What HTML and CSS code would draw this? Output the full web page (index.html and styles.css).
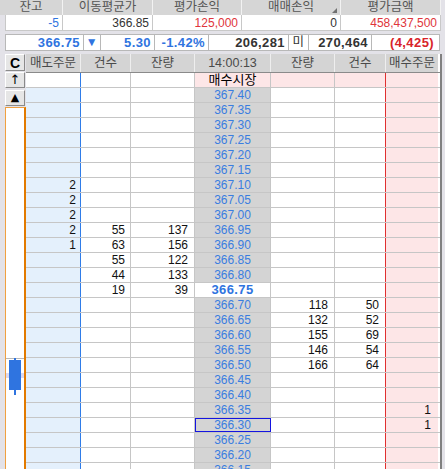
FILE: index.html
```html
<!DOCTYPE html>
<html lang="ko">
<head>
<meta charset="UTF-8" />
<title>호가</title>
<link rel="stylesheet" href="styles.css">
</head>
<body>

<div class="summary">
  <div class="sum-head">
    <div class="c-a">잔고</div>
    <div class="c-b">이동평균가</div>
    <div class="c-c">평가손익</div>
    <div class="c-d sortable">매매손익</div>
    <div class="c-e">평가금액</div>
  </div>
  <div class="sum-vals">
    <div class="c-a blue">-5</div>
    <div class="c-b">366.85</div>
    <div class="c-c red">125,000</div>
    <div class="c-d">0</div>
    <div class="c-e red">458,437,500</div>
  </div>
</div>

<div class="ticker">
  <div class="t-price blue">366.75</div>
  <div class="t-arrow blue">▼</div>
  <div class="t-diff blue">5.30</div>
  <div class="t-rate blue">-1.42%</div>
  <div class="t-vol">206,281</div>
  <div class="t-mi">미</div>
  <div class="t-oi">270,464</div>
  <div class="t-chg red">(4,425)</div>
</div>

<div class="board">
  <div class="side">
    <button class="side-btn btn-c">C</button>
    <button class="side-btn btn-up">↑</button>
    <button class="side-btn btn-top">▲</button>
    <div class="scroll">
      <div class="scroll-mark"></div>
      <div class="scroll-band"></div>
      <div class="candle-wick"></div>
      <div class="candle"></div>
    </div>
  </div>

  <div class="grid">
    <div class="row head">
      <div class="cell s-ord">매도주문</div>
      <div class="cell s-cnt">건수</div>
      <div class="cell s-qty">잔량</div>
      <div class="cell px">14:00:13</div>
      <div class="cell b-qty">잔량</div>
      <div class="cell b-cnt">건수</div>
      <div class="cell b-ord">매수주문</div>
    </div>
    <div class="row market">
      <div class="cell s-ord"></div>
      <div class="cell s-cnt"></div>
      <div class="cell s-qty"></div>
      <div class="cell px">매수시장</div>
      <div class="cell b-qty"></div>
      <div class="cell b-cnt"></div>
      <div class="cell b-ord"></div>
    </div>
    <div id="rows"></div>
  </div>
</div>

<script>
  // 매도 쪽: [주문, 건수, 잔량]
  const sellSide = {
    '367.10': ['2', '', ''],
    '367.05': ['2', '', ''],
    '367.00': ['2', '', ''],
    '366.95': ['2', '55', '137'],
    '366.90': ['1', '63', '156'],
    '366.85': ['', '55', '122'],
    '366.80': ['', '44', '133'],
    '366.75': ['', '19', '39']
  };
  // 매수 쪽: [잔량, 건수, 주문]
  const buySide = {
    '366.70': ['118', '50', ''],
    '366.65': ['132', '52', ''],
    '366.60': ['155', '69', ''],
    '366.55': ['146', '54', ''],
    '366.50': ['166', '64', ''],
    '366.35': ['', '', '1'],
    '366.30': ['', '', '1']
  };
  const current = '366.75';
  const selected = '366.30';

  const rowsEl = document.getElementById('rows');
  let html = '';
  for (let i = 0; i < 26; i++) {
    const price = (36740 - i * 5) / 100;
    const key = price.toFixed(2);
    const s = sellSide[key] || ['', '', ''];
    const b = buySide[key] || ['', '', ''];
    let pxClass = 'cell px';
    if (key === current) pxClass += ' now';
    if (key === selected) pxClass += ' sel';
    html += '<div class="row">' +
      '<div class="cell s-ord">' + s[0] + '</div>' +
      '<div class="cell s-cnt">' + s[1] + '</div>' +
      '<div class="cell s-qty">' + s[2] + '</div>' +
      '<div class="' + pxClass + '">' + key + '</div>' +
      '<div class="cell b-qty">' + b[0] + '</div>' +
      '<div class="cell b-cnt">' + b[1] + '</div>' +
      '<div class="cell b-ord">' + b[2] + '</div>' +
      '</div>';
  }
  rowsEl.innerHTML = html;
</script>

</body>
</html>
```

FILE: styles.css
```css
body {
  margin: 0;
  background: #e3e2e8;
  font-family: 'Liberation Sans', 'Noto Sans CJK KR', sans-serif;
  font-size: 12px;
  color: #111;
  width: 445px;
  height: 469px;
  overflow: hidden;
}
.blue { color: #2f74e0; }
.red { color: #e0353b; }

/* top summary */
.summary {
  width: 441px;
}
.sum-head, .sum-vals {
  display: flex;
}
.sum-head > div, .sum-vals > div {
  box-sizing: border-box;
  border-right: 1px solid #f2f2f2;
}
.c-a { width: 63px; }
.c-b { width: 90px; }
.c-c { width: 89px; }
.c-d { width: 99px; }
.c-e { width: 100px; }
.sum-head > div {
  height: 15px;
  line-height: 15px;
  background: #d6d6d6;
  color: #555;
  text-align: center;
  font-size: 12.5px;
}
.sum-head .sortable {
  position: relative;
}
.sum-head .sortable::after {
  content: '';
  position: absolute;
  right: 3px;
  bottom: 2px;
  border-left: 5px solid transparent;
  border-bottom: 5px solid #707070;
}
.sum-vals > div {
  height: 16px;
  line-height: 16px;
  background: #fff;
  text-align: right;
  padding-right: 3px;
  border-right: 1px solid #c8c8c8;
  border-bottom: 1px solid #c8c8c8;
  color: #333;
}
.sum-vals .c-a {
  margin-left: 5px;
  width: 58px;
  border-left: 1px solid #c8c8c8;
}
.sum-vals .blue { color: #2f74e0; }
.sum-vals .red { color: #e0353b; }

/* ticker line */
.ticker {
  display: flex;
  margin: 3px 0 0 5px;
  width: 435px;
  height: 17px;
  border: 1px solid #b8b8b8;
  box-sizing: border-box;
  background: #fff;
  font-weight: 700;
  font-size: 13px;
  letter-spacing: 0.4px;
  color: #333;
}
.ticker > div {
  box-sizing: border-box;
  border-right: 1px solid #b8b8b8;
  line-height: 15px;
  text-align: right;
  padding-right: 3px;
}
.ticker .blue { color: #2f74e0; }
.ticker .red { color: #d8232a; }
.t-price { width: 78px; }
.t-arrow { width: 17px; text-align: center !important; padding: 0 !important; font-size: 12px; }
.t-diff { width: 54px; }
.t-rate { width: 54px; }
.t-vol { width: 80px; }
.t-mi { width: 20px; text-align: center !important; padding: 0 !important; font-weight: 400; font-size: 12.5px; }
.t-oi { width: 63px; }
.t-chg { flex: 1; border-right: none !important; padding-right: 5px !important; }

/* order board */
.board {
  display: flex;
  margin: 3px 0 0 5px;
}
.side {
  width: 21px;
  display: flex;
  flex-direction: column;
}
.side-btn {
  width: 20px;
  height: 16px;
  margin: 0 0 1px 0;
  padding: 0;
  background: #e6e6e6;
  border: 1px solid;
  border-color: #fff #8a8a8a #8a8a8a #fff;
  font-family: 'DejaVu Sans', sans-serif;
  font-size: 12px;
  line-height: 14px;
  color: #000;
}
.btn-c {
  height: 17px;
  font-family: 'Liberation Sans', sans-serif;
  font-weight: 700;
  font-size: 14px;
}
.btn-up {
  font-size: 13px;
}
.btn-top {
  font-size: 11px;
  margin-top: 1px;
}
.scroll {
  position: relative;
  height: 370px;
  background: #fff;
  border: 1px solid #f0a040;
  border-right: 2px solid #e27a00;
  box-sizing: border-box;
}
.scroll-mark {
  position: absolute;
  left: 0;
  right: 0;
  top: 250px;
  height: 1px;
  background: #b8b8b8;
}
.scroll-band {
  position: absolute;
  left: 0;
  right: 0;
  top: 265px;
  height: 5px;
  background: #dcd8ef;
}
.candle-wick {
  position: absolute;
  left: 8px;
  top: 250px;
  width: 2px;
  height: 37px;
  background: #2f74e0;
}
.candle {
  position: absolute;
  left: 3px;
  top: 252px;
  width: 12px;
  height: 30px;
  background: #2f74e0;
}

.grid {
  width: 414px;
  border-right: 2px solid #808080;
  background: #fff;
}
.row {
  display: flex;
  height: 15px;
  box-sizing: border-box;
  border-bottom: 1px solid #c6c6c6;
}
.cell {
  box-sizing: border-box;
  border-right: 1px solid #c6c6c6;
  line-height: 14px;
  text-align: right;
  white-space: nowrap;
  overflow: hidden;
}
.s-ord { width: 55px; padding-right: 4px; background: #e4f0fc; border-right-color: #2f7ce8; }
.s-cnt { width: 50px; padding-right: 5px; }
.s-qty { width: 64px; padding-right: 6px; }
.px { width: 76px; text-align: center; background: #d4d4d4; color: #3a7de0; }
.b-qty { width: 64px; padding-right: 6px; }
.b-cnt { width: 51px; padding-right: 6px; border-right-color: #e03030; }
.b-ord { width: 52px; padding-right: 7px; background: #fde6e7; border-right: none; }

.px.now {
  background: #fff;
  font-weight: 700;
  font-size: 13px;
  letter-spacing: 0.4px;
  color: #2f74e0;
}
.px.sel {
  outline: 1px solid #1414e0;
  outline-offset: -1px;
}

.row.head {
  height: 19px;
  border-bottom: 1px solid #8a8a8a;
}
.row.head .cell {
  background: #d4d4d4;
  color: #4a4a4a;
  text-align: center;
  line-height: 18px;
  padding: 0;
  border-right-color: #eeeeee;
  font-size: 12.5px;
}
.row.head .px { color: #4a4a4a; }
.row.market .s-ord { background: #fff; }
.row.market .px,
.row.market .b-qty,
.row.market .b-cnt {
  background: #fde6e7;
}
.row.market .px {
  color: #000;
  font-size: 13px;
}
```
